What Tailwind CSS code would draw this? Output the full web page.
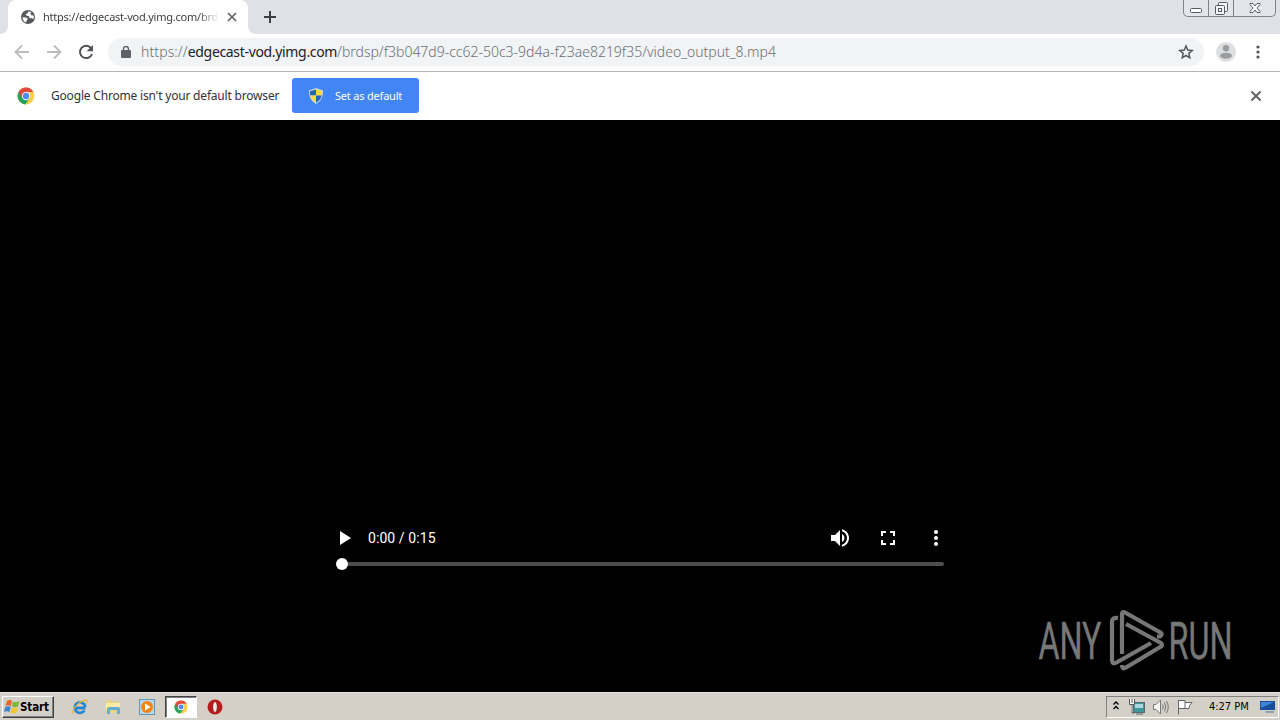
<!DOCTYPE html>
<html lang="en">
<head>
<meta charset="utf-8">
<title>video_output_8.mp4</title>
<script src="https://cdn.jsdelivr.net/npm/@tailwindcss/browser@4"></script>
</head>
<body class="w-[1280px] h-[720px] overflow-hidden flex flex-col bg-black font-['Noto_Sans','Open_Sans',sans-serif]">
<svg class="hidden">
  <symbol id="chrome" viewBox="0 0 48 48">
    <circle cx="24" cy="24" r="22.500" fill="#fdd04a"/>
    <path d="M24 24 4.500 12.500A22.500 22.500 0 0 0 22 46.400L34 29.500Z" fill="#27a25a"/>
    <path d="M24 24 12 28 4.500 12.500A22.500 22.500 0 0 1 43.500 13H24Z" fill="#e0483c"/>
    <circle cx="24" cy="24" r="11" fill="#fff"/><circle cx="24" cy="24" r="8.500" fill="#4c8cf0"/>
  </symbol>
</svg>

<header class="h-[34px] shrink-0 bg-[#dee1e6] flex items-start">
  <div class="w-2 h-full bg-white"><div class="w-2 h-full bg-[#dee1e6] rounded-br-lg"></div></div>
  <div class="w-[240px] h-full bg-white rounded-t-lg flex items-center pl-3">
    <svg class="w-4 h-4 shrink-0" viewBox="0 0 16 16"><circle cx="8" cy="8" r="7" fill="#55595d"/><path d="M2.500 8.200C4 8.500 6.500 8 7.500 9.300 8.300 10.500 6.500 11 6.500 12.200L6 13.500A5.800 5.800 0 0 1 2.500 8.200ZM8.500 2.300 7.500 4.200 5.500 5.500 7 6.800 9 7.200 9.500 9 12 9.300 13.500 10A5.800 5.800 0 0 0 13.600 6.500L11.500 6.300 10.300 4.800 11.500 3.300Z" fill="#fff"/></svg>
    <div class="ml-[7px] w-[176px] whitespace-nowrap text-[11px] leading-4 tracking-[-0.23px] text-[#3c4043] [mask-image:linear-gradient(to_right,black_88%,transparent)]">https://edgecast-vod.yimg.com/brds</div>
    <svg class="ml-[8px] w-[10px] h-[10px]" viewBox="0 0 10 10" stroke="#5f6368" stroke-width="1.700"><path d="M1 1 9 9M9 1 1 9"/></svg>
  </div>
  <div class="w-2 h-full bg-white"><div class="w-2 h-full bg-[#dee1e6] rounded-bl-lg"></div></div>
  <svg class="mt-[11px] ml-[8px] w-3 h-3" viewBox="0 0 12 12" stroke="#3c4043" stroke-width="2"><path d="M6 0V12M0 6H12"/></svg>
  <div class="ml-auto mr-[4px] w-[93px] h-[17px] border border-t-0 border-[#7d828b] rounded-b-[5px] flex text-[#555b66] bg-[#e2e5ea]">
    <div class="w-[25px] border-r border-[#7d828b] flex justify-center items-end pb-[3px]"><svg class="w-3 h-[5px]" viewBox="0 0 12 5"><rect x=".5" y=".5" width="11" height="4" rx="1" fill="#fff" stroke="currentColor"/></svg></div>
    <div class="w-[25px] border-r border-[#7d828b] flex justify-center pt-[2px]"><svg class="w-[13px] h-[13px]" viewBox="0 0 13 13" fill="#f4f5f7" stroke="currentColor"><rect x="3.500" y=".5" width="9" height="9" rx="1"/><rect x=".5" y="3.500" width="9" height="9" rx="1"/><rect x="3.500" y="6.500" width="3" height="3"/></svg></div>
    <div class="flex-1 flex justify-center pt-[3px]"><svg class="w-3 h-[10px]" viewBox="0 0 12 10"><path d="M1 .5H4L6 3 8 .5H11V1.500L8 5 11 8.500V9.500H8L6 7 4 9.500H1V8.500L4 5 1 1.500Z" fill="#fff" stroke="currentColor"/></svg></div>
  </div>
</header>

<nav class="h-[38px] shrink-0 bg-white border-b border-[#b3b5b8] flex items-center pb-px">
  <svg class="ml-[14px] w-4 h-4" viewBox="0 0 16 16" fill="none" stroke="#babcbe" stroke-width="1.800"><path d="M15 8H2M8 1.500 1.500 8 8 14.500"/></svg>
  <svg class="ml-4 w-4 h-4" viewBox="0 0 16 16" fill="none" stroke="#babcbe" stroke-width="1.800"><path d="M1 8H14M8 1.500 14.500 8 8 14.500"/></svg>
  <svg class="ml-4 w-4 h-4" viewBox="0 0 16 16"><path d="M13 4A6.200 6.200 0 1 0 14 10" fill="none" stroke="#4e5256" stroke-width="2"/><path d="M15 1V7.300H8.700Z" fill="#4e5256"/></svg>
  <div class="ml-[14px] w-[1096px] h-7 rounded-full bg-[#f1f3f4] flex items-center pl-[13px] pr-[10px]">
    <svg class="w-[10px] h-3" viewBox="0 0 10 12"><rect y="4" width="10" height="8" rx="1" fill="#5f6368"/><path d="M2.500 4.500V3a2.500 2.500 0 0 1 5 0V4.500" fill="none" stroke="#5f6368" stroke-width="1.400"/></svg>
    <div class="ml-[10px] whitespace-nowrap text-[14px] leading-5 font-light text-[#6b7075] flex"><span class="tracking-[0.1px]">https://</span><span class="text-[#202124] font-normal tracking-[-0.33px]">edgecast-vod.yimg.com</span><span class="tracking-[-0.01px]">/brdsp/f3b047d9-cc62-50c3-9d4a-f23ae8219f35/video_output_8.mp4</span></div>
    <svg class="ml-auto w-4 h-4" viewBox="0 0 16 16" fill="none" stroke="#55595d" stroke-width="1.500"><path d="M8 2 9.700 6.100 14.200 6.500 10.800 9.400 11.800 13.800 8 11.500 4.200 13.800 5.200 9.400 1.800 6.500 6.300 6.100Z"/></svg>
  </div>
  <svg class="ml-3 w-5 h-5" viewBox="0 0 20 20"><circle cx="10" cy="10" r="10" fill="#dedfe1"/><g fill="#9a9c9f"><circle cx="10" cy="6.300" r="3.200"/><ellipse cx="10" cy="13.700" rx="6" ry="3"/></g></svg>
  <svg class="ml-[20px] w-1 h-[14px]" viewBox="0 0 4 14" fill="#505458"><circle cx="2" cy="2" r="1.600"/><circle cx="2" cy="7" r="1.600"/><circle cx="2" cy="12" r="1.600"/></svg>
</nav>

<section class="h-12 shrink-0 bg-white flex items-center">
  <svg class="ml-[17px] w-[18px] h-[18px]"><use href="#chrome"/></svg>
  <div class="ml-4 w-[241px] whitespace-nowrap text-[12px] leading-5 tracking-[-0.19px] text-[#303336]">Google Chrome isn't your default browser</div>
  <div class="w-[127px] h-[35px] mb-px rounded-[3px] bg-[#4285f4] flex items-center pl-[17px]">
    <svg class="w-[14px] h-4" viewBox="0 0 14 16"><path d="M7 0 14 2.500C14 9 12 13 7 16 2 13 0 9 0 2.500Z" fill="#d5d9d5"/><path d="M7 1.500V7.500H1.300C1 6 1 5 1 3.300Z" fill="#2465b5"/><path d="M7 1.500V7.500H12.700C13 6 13 5 13 3.300Z" fill="#ffd83d"/><path d="M7 7.500V14.700C4 13 2 11 1.300 7.500Z" fill="#ffd83d"/><path d="M7 7.500V14.700C10 13 12 11 12.700 7.500Z" fill="#2465b5"/></svg>
    <span class="ml-3 whitespace-nowrap text-[11px] leading-4 tracking-[-0.2px] text-white">Set as default</span>
  </div>
  <svg class="ml-auto mr-[19px] w-[10px] h-[10px]" viewBox="0 0 10 10" stroke="#5f6368" stroke-width="2"><path d="M.5 .5 9.500 9.500M9.500 .5 .5 9.500"/></svg>
</section>

<main class="h-[572px] shrink-0 bg-black relative">
  <div class="pt-[408px] ml-[336px] w-[608px]">
    <div class="h-5 flex items-center text-white">
      <svg class="ml-[4px] w-3 h-[14px]" viewBox="0 0 12 14"><path d="M0 0 11 7 0 14Z" fill="#fff"/></svg>
      <span class="ml-4 w-[68px] whitespace-nowrap font-[Roboto,sans-serif] text-[14px] leading-5 tracking-[0.08px]">0:00 / 0:15</span>
      <svg class="ml-auto w-6 h-6" viewBox="0 0 24 24" fill="#fff"><path d="M3 9v6h4l5 5V4L7 9H3zm13.500 3c0-1.770-1.020-3.290-2.500-4.030v8.050c1.480-.73 2.500-2.250 2.500-4.020zM14 3.230v2.060c2.890.86 5 3.540 5 6.710s-2.110 5.850-5 6.710v2.060c4.010-.91 7-4.490 7-8.770s-2.990-7.860-7-8.770z"/></svg>
      <svg class="ml-6 w-6 h-6" viewBox="0 0 24 24" fill="#fff"><path d="M7 14H5v5h5v-2H7v-3zm-2-4h2V7h3V5H5v5zm12 7h-3v2h5v-5h-2v3zM14 5v2h3v3h2V5h-5z"/></svg>
      <svg class="ml-6 -mr-1 w-6 h-6" viewBox="0 0 24 24" fill="#fff"><circle cx="12" cy="6" r="2"/><circle cx="12" cy="12" r="2"/><circle cx="12" cy="18" r="2"/></svg>
    </div>
    <div class="mt-[10px] flex items-center h-3"><div class="w-3 h-3 shrink-0 rounded-full bg-white"></div><div class="flex-1 h-1 rounded-r-sm bg-[#4d4d4d]"></div></div>
  </div>
  <svg class="absolute left-[1030px] top-[480px] w-[240px] h-20 overflow-visible font-[Roboto,sans-serif] text-[51px] font-normal" viewBox="0 0 240 80">
    <g fill="#777" stroke="#777" stroke-width=".4">
      <text x="8.500" y="59" textLength="63" lengthAdjust="spacingAndGlyphs">ANY</text>
      <text x="138.500" y="59" textLength="64" lengthAdjust="spacingAndGlyphs">RUN</text>
    </g>
    <g fill="none" stroke="#777" stroke-width="4.200" stroke-linejoin="round">
      <path d="M92 54V14Q92 11 95 12.500L130.500 32.500Q133 34.500 130 36.500H127"/>
      <path d="M88 18Q82 17 82 22V60Q82 65 86.500 62.500L121 43"/>
      <path d="M96 24 131 43Q133 45 131 46.500L96 67.500Q92 70 92 65"/>
    </g>
  </svg>
</main>

<footer class="h-7 shrink-0 bg-[#d4d0c8] border-t border-[#e8e5df] flex items-center text-black">
  <div class="ml-[2px] w-[52px] h-[22px] bg-[#d4d0c8] border border-t-white border-l-white border-r-[#404040] border-b-[#404040] shadow-[inset_-1px_-1px_0_#808080] flex items-center pl-[1px]">
    <svg class="w-4 h-4 shrink-0" viewBox="0 0 16 16"><path d="M3 2Q6 0 8 2L7 7Q4 5.500 1.500 7Z" fill="#e8642c"/><path d="M9 2.500Q12 4 15.500 2L14 7.500Q11 9 8 7.500Z" fill="#7db83a"/><path d="M1.300 8Q4 6.500 6.700 8L5.500 13Q3 11.500 0 13Z" fill="#3d83cf"/><path d="M7.800 8.500Q10.500 10 13.700 8.500L12.500 13.500Q9.500 15.500 6.500 13.500Z" fill="#f4c52e"/></svg>
    <span class="text-[11.500px] leading-4 font-bold font-['DejaVu_Sans_Condensed','DejaVu_Sans',sans-serif] tracking-[-0.1px]">Start</span>
  </div>
  <svg class="ml-[18px] w-4 h-4" viewBox="0 0 16 16"><path d="M13.500 9H4M13.300 8A5.300 5.300 0 1 0 12.500 11.500" fill="none" stroke="#2588ce" stroke-width="2.800"/><path d="M1 14.500C-1 10 9 1 14.500 1.200Q16 1.800 14 5" fill="none" stroke="#e5b53c" stroke-width="1.200"/></svg>
  <svg class="ml-[17px] w-4 h-4" viewBox="0 0 16 16"><path d="M1 1H6L7 2.500H14V14H1Z" fill="#e9d581"/><path d="M1 4H15V11H1Z" fill="#f8eaac"/><path d="M2 15V9.500Q2 8 4 8H13Q15 8 15 9.500V15H12V11H5V15Z" fill="#67add1"/></svg>
  <svg class="ml-[18px] w-4 h-4" viewBox="0 0 16 16"><rect x=".5" y=".5" width="15" height="15" fill="#b9d8ed" stroke="#5f95bd"/><circle cx="8" cy="8" r="6" fill="#f08519"/><path d="M6 4.500 11.500 8 6 11.500Z" fill="#fff"/></svg>
  <div class="ml-[10px] w-8 h-[22px] bg-white border border-t-[#404040] border-l-[#404040] border-r-white border-b-white shadow-[inset_1px_1px_0_#808080] flex items-center justify-center"><svg class="w-[14px] h-[14px]"><use href="#chrome"/></svg></div>
  <svg class="ml-[10px] w-4 h-4" viewBox="0 0 16 16"><circle cx="8" cy="8" r="7.500" fill="#b91c1c"/><ellipse cx="8" cy="8" rx="2.300" ry="5.500" fill="#f5e8e8" stroke="#7a0c0c" stroke-width=".7"/></svg>
  <div class="ml-auto mr-[1px] w-[173px] h-[22px] border border-t-[#808080] border-l-[#808080] border-r-white border-b-white flex items-center">
    <svg class="ml-[6px] w-[6px] h-[9px] mb-[2px]" viewBox="0 0 6 9" fill="none" stroke="#000" stroke-width="1.300"><path d="M.5 3.500 3 1 5.500 3.500M.5 8 3 5.500 5.500 8"/></svg>
    <svg class="ml-[10px] w-4 h-4" viewBox="0 0 16 16"><rect x="4.500" y="3.500" width="11" height="10" fill="#3c9a9a" stroke="#536b70"/><rect x="6" y="5" width="8" height="4" fill="#a9d7dd"/><path d="M7 15H14" stroke="#536b70"/><path d="M0 0H6V6H4V14H2V6H0Z" fill="#fff"/><path d="M.5 0V5.500H5.500V0M3 0V4M3 5.500V14H5" fill="none" stroke="#555"/></svg>
    <svg class="ml-2 w-4 h-4" viewBox="0 0 16 16" fill="none" stroke="#77777a"><path d="M.5 5.500H3L7.500 1V15L3 10.500H.5Z" fill="#f4f4f4"/><path d="M9.500 5.500Q11 8 9.500 10.500M11.500 3.500Q14 8 11.500 12.500M13.500 2Q17 8 13.500 14"/></svg>
    <svg class="ml-2 w-4 h-4" viewBox="0 0 16 16" fill="#fff" stroke="#66666a"><path d="M1.500 1V15.500M1.500 1.500H8V9.500H1.500ZM8 3.500H15L12.500 6.500 12 9.500H8"/></svg>
    <span class="ml-4 w-[42px] whitespace-nowrap text-[11px] leading-4 tracking-[-0.02px] font-['DejaVu_Sans_Condensed','DejaVu_Sans',sans-serif]">4:27 PM</span>
    <svg class="ml-[9px] w-4 h-[14px]" viewBox="0 0 16 14"><path d="M0 1H15V10H0Z" fill="#174f9c"/><path d="M1 2H14L1 8Z" fill="#3e86d3"/><path d="M5 11H14V13H6Z" fill="#8ba1b5"/></svg>
  </div>
</footer>
</body>
</html>
